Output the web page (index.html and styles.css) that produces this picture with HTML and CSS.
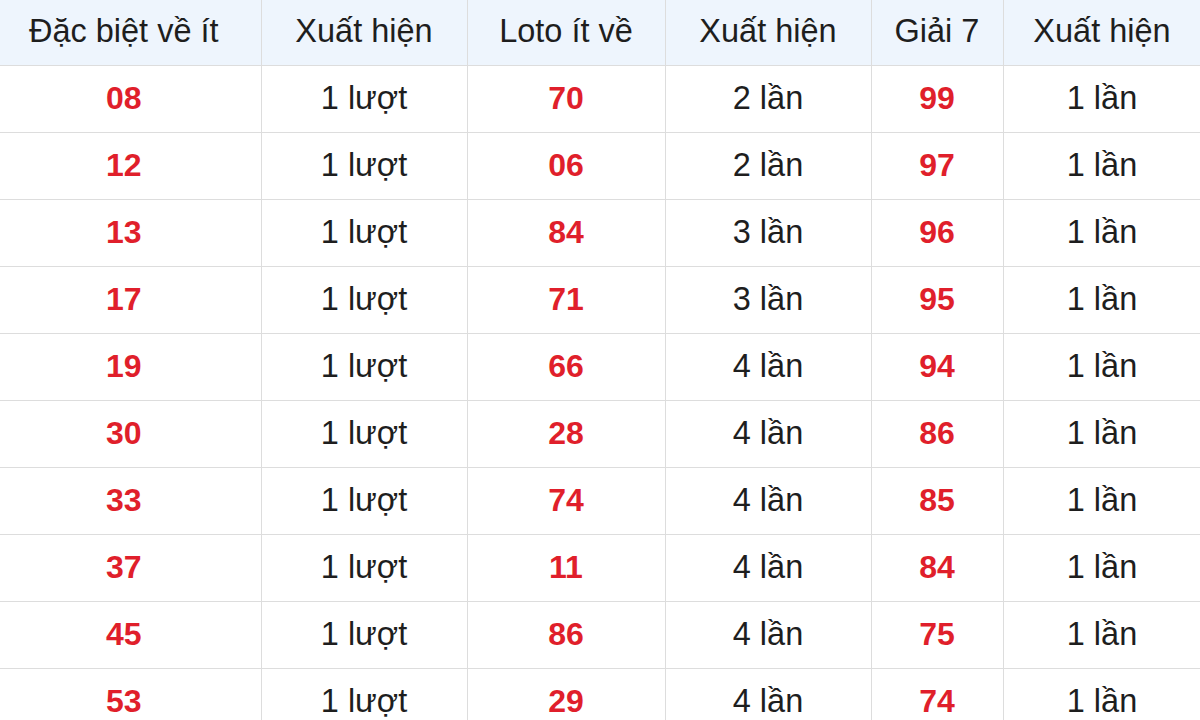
FILE: index.html
```html
<!DOCTYPE html>
<html>
<head>
<meta charset="utf-8">
<link rel="stylesheet" href="styles.css">
</head>
<body>
<table class="stats">
  <colgroup>
    <col class="c1"><col class="c2"><col class="c3"><col class="c4"><col class="c5"><col class="c6">
  </colgroup>
  <thead>
    <tr><th>Đặc biệt về ít</th><th>Xuất hiện</th><th>Loto ít về</th><th>Xuất hiện</th><th>Giải 7</th><th>Xuất hiện</th></tr>
  </thead>
  <tbody>
    <tr><td class="num">08</td><td>1 lượt</td><td class="num">70</td><td>2 lần</td><td class="num">99</td><td>1 lần</td></tr>
    <tr><td class="num">12</td><td>1 lượt</td><td class="num">06</td><td>2 lần</td><td class="num">97</td><td>1 lần</td></tr>
    <tr><td class="num">13</td><td>1 lượt</td><td class="num">84</td><td>3 lần</td><td class="num">96</td><td>1 lần</td></tr>
    <tr><td class="num">17</td><td>1 lượt</td><td class="num">71</td><td>3 lần</td><td class="num">95</td><td>1 lần</td></tr>
    <tr><td class="num">19</td><td>1 lượt</td><td class="num">66</td><td>4 lần</td><td class="num">94</td><td>1 lần</td></tr>
    <tr><td class="num">30</td><td>1 lượt</td><td class="num">28</td><td>4 lần</td><td class="num">86</td><td>1 lần</td></tr>
    <tr><td class="num">33</td><td>1 lượt</td><td class="num">74</td><td>4 lần</td><td class="num">85</td><td>1 lần</td></tr>
    <tr><td class="num">37</td><td>1 lượt</td><td class="num">11</td><td>4 lần</td><td class="num">84</td><td>1 lần</td></tr>
    <tr><td class="num">45</td><td>1 lượt</td><td class="num">86</td><td>4 lần</td><td class="num">75</td><td>1 lần</td></tr>
    <tr><td class="num">53</td><td>1 lượt</td><td class="num">29</td><td>4 lần</td><td class="num">74</td><td>1 lần</td></tr>
  </tbody>
</table>
</body>
</html>
```
FILE: styles.css
```css
html, body {
  margin: 0;
  padding: 0;
  background: #ffffff;
}
body {
  font-family: "Liberation Sans", Arial, sans-serif;
  color: #1e1e1e;
  overflow: hidden;
}
.stats {
  width: 1214px;
  margin-left: -13px;
  border-collapse: collapse;
  table-layout: fixed;
}
.c1 { width: 274px; }
.c2 { width: 206px; }
.c3 { width: 198px; }
.c4 { width: 206px; }
.c5 { width: 132px; }
.c6 { width: 198px; }
.stats th,
.stats td {
  border: 1px solid #dddddd;
  text-align: center;
  padding: 0 0 2px 0;
  font-size: 32.5px;
  line-height: 1;
}
.stats tr > :first-child { border-left: none; }
.stats th {
  height: 63px;
  background: #eef5fd;
  font-weight: normal;
  color: #1e1e1e;
  border-top: none;
}
.stats td {
  height: 64px;
}
.stats td.num {
  color: #e01f2b;
  font-weight: bold;
  font-size: 32px;
}
```
